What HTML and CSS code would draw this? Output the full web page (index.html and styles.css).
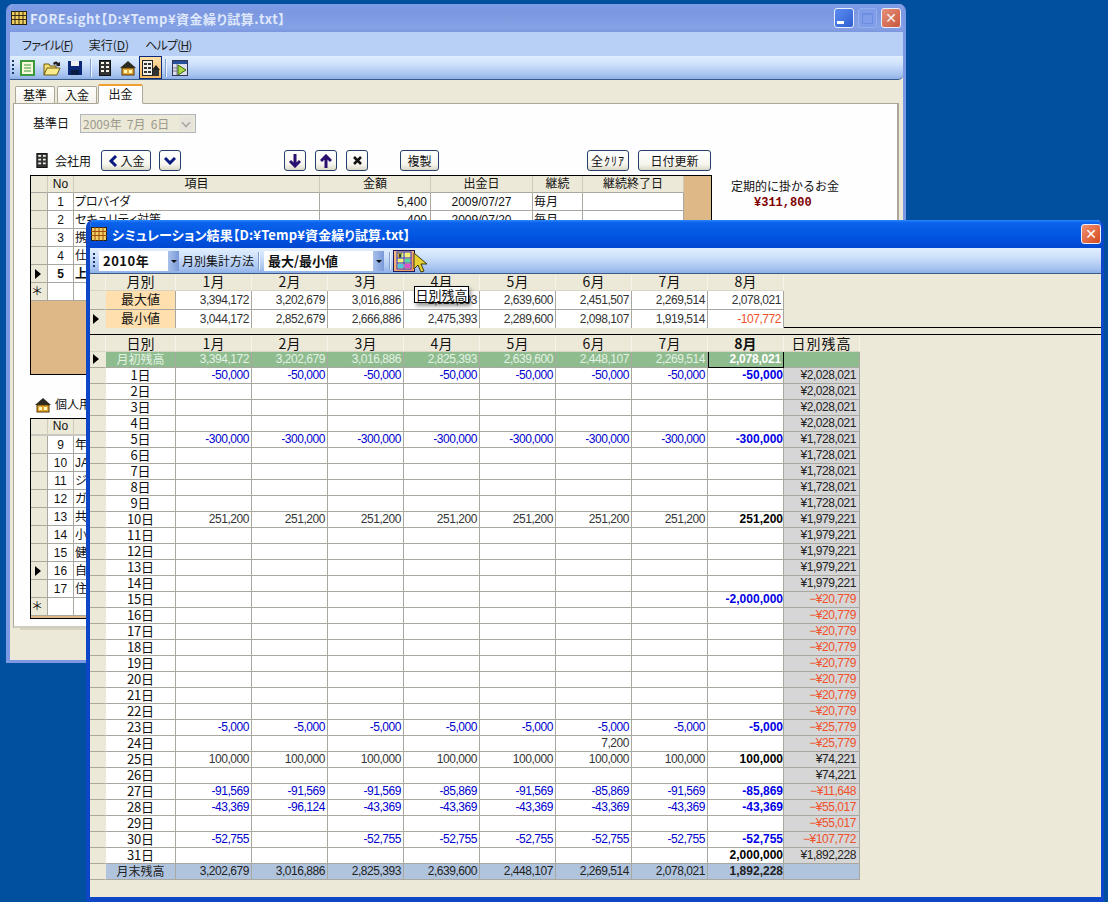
FILE: index.html
```html
<!DOCTYPE html>
<html lang="ja">
<head>
<meta charset="utf-8">
<title>FOREsight</title>
<link rel="stylesheet" href="styles.css">
</head>
<body>
<div class="win win-main">
  <div class="title title-off">
    <svg class="tico" width="16" height="14" viewBox="0 0 16 14"><rect x=".5" y=".5" width="15" height="13" fill="#f0d060" stroke="#2a2010"/><path d="M4 0v14M8 0v14M12 0v14M0 4.500h16M0 8.500h16" stroke="#3a2a10"/></svg>
    <span class="ttext">FOREsight【D:¥Temp¥資金繰り試算.txt】</span>
    <span class="wbtns">
      <span class="wb wb-min"><i></i></span>
      <span class="wb wb-max"><i></i></span>
      <span class="wb wb-close">✕</span>
    </span>
  </div>
  <div class="menu"><span class="mn">ファイル(<u>F</u>)</span><span>実行(<u>D</u>)</span><span class="mn">ヘルプ(<u>H</u>)</span></div>
  <div class="tbar tbar-main">
    <i class="grip"></i>
    <svg class="ic ic-note" width="15" height="16" viewBox="0 0 15 16"><rect x="1" y="1" width="13" height="14" fill="#f6f8d8" stroke="#3c9a3c" stroke-width="2"/><path d="M4 5h7M4 8h7M4 11h7" stroke="#3c9a3c"/></svg>
    <svg class="ic ic-open" width="18" height="16" viewBox="0 0 18 16"><path d="M1 15V4h5l1 2h6v2" fill="#f8e070" stroke="#6a5a10"/><path d="M1 15l3-7h13l-3 7z" fill="#fbe98a" stroke="#6a5a10"/><path d="M10 3c2-2 4-2 5 0l2-1v4h-4l1-1c-1-1-2-1-3 0z" fill="#222"/></svg>
    <svg class="ic ic-save" width="14" height="14" viewBox="0 0 14 14"><rect width="14" height="14" fill="#0a2a78"/><rect x="3" y="0" width="8" height="5" fill="#f0f0f0"/><rect x="3" y="9" width="8" height="5" fill="#0a1a40"/></svg>
    <i class="sep sep1"></i>
    <svg class="ic ic-bld" width="12" height="16" viewBox="0 0 12 16"><rect x=".5" y=".5" width="11" height="15" fill="#333" stroke="#111"/><path d="M2 2h3v2H2zM7 2h3v2H7zM2 6h3v2H2zM7 6h3v2H7zM2 10h3v2H2zM7 10h3v2H7z" fill="#f4f4e8"/></svg>
    <svg class="ic ic-house" width="16" height="16" viewBox="0 0 16 16"><path d="M8 1L0 8h16z" fill="#2a2a20"/><rect x="2" y="8" width="12" height="7" fill="#e8a830" stroke="#50360a"/><rect x="4" y="10" width="3" height="3" fill="#fff8c0"/><rect x="9" y="10" width="3" height="3" fill="#fff8c0"/></svg>
    <span class="tb-on"><svg width="18" height="16" viewBox="0 0 18 16"><rect x=".5" y=".5" width="10" height="15" fill="#f2f0e8" stroke="#222"/><path d="M2 3h3v2H2zM6 3h3v2H6zM2 7h3v2H2zM6 7h3v2H6zM2 11h3v2H2zM6 11h3v2H6z" fill="#333"/><path d="M14 5l4 5H10z" fill="#222"/><rect x="11" y="10" width="6" height="6" fill="#333"/></svg></span>
    <i class="sep sep2"></i>
    <svg class="ic ic-run" width="16" height="16" viewBox="0 0 16 16"><rect x=".5" y=".5" width="15" height="15" fill="#dde" stroke="#335"/><rect x="1" y="1" width="14" height="3" fill="#26509a"/><path d="M1 8h4M1 11h4M5 4v11" stroke="#778"/><path d="M6 5l8 5-8 5z" fill="#a8d840" stroke="#3a6a10"/></svg>
  </div>
  <div class="tabs"><span class="tab">基準</span><span class="tab">入金</span><span class="tab tab-on">出金</span></div>
  <div class="panel">
    <div class="daterow">
      <span class="lbl">基準日</span>
      <span class="combo-off"><span>2009年 7月 6日</span><b></b></span>
    </div>
    <div class="btnrow">
      <svg class="bldico" width="12" height="15" viewBox="0 0 12 16"><rect x=".5" y=".5" width="11" height="15" fill="#333" stroke="#111"/><path d="M2 2h3v2H2zM7 2h3v2H7zM2 6h3v2H2zM7 6h3v2H7zM2 10h3v2H2zM7 10h3v2H7z" fill="#f4f4e8"/></svg>
      <span class="lbl">会社用</span>
      <span class="btn b-in"><svg width="10" height="12" viewBox="0 0 10 12"><path d="M8 1L3 6l5 5" fill="none" stroke="#0a1a80" stroke-width="3"/></svg>入金</span>
      <span class="btn b-ic b-fold"><svg width="12" height="8" viewBox="0 0 12 8"><path d="M1 1l5 5 5-5" fill="none" stroke="#0a1a80" stroke-width="3"/></svg></span>
      <span class="btn b-ic b-down"><svg width="12" height="14" viewBox="0 0 12 14"><path d="M6 0v11M1 7l5 5 5-5" fill="none" stroke="#2a1070" stroke-width="3"/></svg></span>
      <span class="btn b-ic b-up"><svg width="12" height="14" viewBox="0 0 12 14"><path d="M6 14V3M1 7l5-5 5 5" fill="none" stroke="#2a1070" stroke-width="3"/></svg></span>
      <span class="btn b-ic b-del"><svg width="9" height="9" viewBox="0 0 9 9"><path d="M1 1l7 7M8 1L1 8" stroke="#111" stroke-width="2.500"/></svg></span>
      <span class="btn b-copy">複製</span>
      <span class="btn b-clr">全ｸﾘｱ</span>
      <span class="btn b-upd">日付更新</span>
    </div>
    <div class="gridrow">
      <div class="gridbox box1">
        <table class="mg">
          <colgroup><col class="c17"><col class="c26"><col class="c246"><col class="c111"><col class="c102"><col class="c50"><col class="c101"></colgroup>
          <tr class="mh"><th></th><th>No</th><th>項目</th><th>金額</th><th>出金日</th><th>継続</th><th>継続終了日</th></tr>
          <tr><td class="rh"></td><td class="ct">1</td><td>プロバイダ</td><td class="rt">5,400</td><td class="ct">2009/07/27</td><td>毎月</td><td></td></tr>
          <tr><td class="rh"></td><td class="ct">2</td><td>セキュリティ対策</td><td class="rt">400</td><td class="ct">2009/07/20</td><td>毎月</td><td></td></tr>
          <tr><td class="rh"></td><td class="ct">3</td><td>携</td><td></td><td></td><td></td><td></td></tr>
          <tr><td class="rh"></td><td class="ct">4</td><td>仕</td><td></td><td></td><td></td><td></td></tr>
          <tr class="bold"><td class="rh"><i class="ptr"></i></td><td class="ct">5</td><td>上</td><td></td><td></td><td></td><td></td></tr>
          <tr class="newrow"><td class="rh">＊</td><td></td><td></td><td></td><td></td><td></td><td></td></tr>
        </table>
      </div>
      <div class="side">
        <div>定期的に掛かるお金</div>
        <div class="sum">¥311,800</div>
      </div>
    </div>
    <div class="btnrow2">
      <svg width="16" height="16" viewBox="0 0 16 16"><path d="M8 1L0 8h16z" fill="#2a2a20"/><rect x="2" y="8" width="12" height="7" fill="#e8a830" stroke="#50360a"/><rect x="4" y="10" width="3" height="3" fill="#fff8c0"/><rect x="9" y="10" width="3" height="3" fill="#fff8c0"/></svg>
      <span class="lbl">個人用</span>
    </div>
    <div class="gridbox box2">
      <table class="mg">
        <colgroup><col class="c17"><col class="c26"><col class="c246"><col class="c111"><col class="c102"><col class="c50"><col class="c101"></colgroup>
        <tr class="mh"><th></th><th>No</th><th></th><th></th><th></th><th></th><th></th></tr>
        <tr><td class="rh"></td><td class="ct">9</td><td>年</td><td></td><td></td><td></td><td></td></tr>
        <tr><td class="rh"></td><td class="ct">10</td><td>JA</td><td></td><td></td><td></td><td></td></tr>
        <tr><td class="rh"></td><td class="ct">11</td><td>ジ</td><td></td><td></td><td></td><td></td></tr>
        <tr><td class="rh"></td><td class="ct">12</td><td>ガ</td><td></td><td></td><td></td><td></td></tr>
        <tr><td class="rh"></td><td class="ct">13</td><td>共</td><td></td><td></td><td></td><td></td></tr>
        <tr><td class="rh"></td><td class="ct">14</td><td>小</td><td></td><td></td><td></td><td></td></tr>
        <tr><td class="rh"></td><td class="ct">15</td><td>健</td><td></td><td></td><td></td><td></td></tr>
        <tr><td class="rh"><i class="ptr"></i></td><td class="ct">16</td><td>自</td><td></td><td></td><td></td><td></td></tr>
        <tr><td class="rh"></td><td class="ct">17</td><td>住</td><td></td><td></td><td></td><td></td></tr>
        <tr class="newrow"><td class="rh">＊</td><td></td><td></td><td></td><td></td><td></td><td></td></tr>
      </table>
    </div>
  </div>
</div>

<div class="win win-sub">
  <div class="title title-on">
    <svg class="tico2" width="16" height="14" viewBox="0 0 16 14"><rect x=".5" y=".5" width="15" height="13" fill="#f0d060" stroke="#2a2010"/><path d="M4 0v14M8 0v14M12 0v14M0 4.500h16M0 8.500h16" stroke="#a04a10"/></svg>
    <span class="ttext ttext-on">シミュレーション結果【D:¥Temp¥資金繰り試算.txt】</span>
    <span class="wbtns wbtns-sub"><span class="wb wb-close wb-close-on">✕</span></span>
  </div>
  <div class="tbar tbar-sub">
    <i class="grip"></i>
    <span class="combo c-year"><span>2010年</span><b></b></span>
    <span class="tlbl">月別集計方法</span>
    <i class="sep sep3"></i>
    <span class="combo c-mode"><span>最大/最小値</span><b></b></span>
    <i class="sep sep4"></i>
    <span class="tb-on2"><svg width="16" height="19" viewBox="0 0 16 19"><rect x="1" y="1" width="14" height="17" fill="#f4f070" stroke="#3030c0"/><path d="M1 7h14M1 12h14M8 1v17" stroke="#3030e0"/><rect x="9" y="8" width="5" height="3" fill="#50d8a0"/><rect x="2" y="13" width="5" height="4" fill="#50c8e0"/><rect x="9" y="13" width="5" height="4" fill="#e050d0"/><text x="2" y="6.500" class="yen">¥</text></svg></span>
  </div>
  <div class="upper">
    <table class="dg ug">
      <colgroup><col class="g16"><col class="g70"><col class="g76"><col class="g76"><col class="g76"><col class="g76"><col class="g76"><col class="g76"><col class="g76"><col class="g76"></colgroup>
      <tr class="dh"><th></th><th>月別</th><th>1月</th><th>2月</th><th>3月</th><th>4月</th><th>5月</th><th>6月</th><th>7月</th><th>8月</th></tr>
      <tr class="ur"><td class="rh"></td><td class="cap">最大値</td><td>3,394,172</td><td>3,202,679</td><td>3,016,886</td><td>2,825,393</td><td>2,639,600</td><td>2,451,507</td><td>2,269,514</td><td>2,078,021</td></tr>
      <tr class="ur"><td class="rh"><i class="ptr"></i></td><td class="cap">最小値</td><td>3,044,172</td><td>2,852,679</td><td>2,666,886</td><td>2,475,393</td><td>2,289,600</td><td>2,098,107</td><td>1,919,514</td><td class="neg">-107,772</td></tr>
    </table>
  </div>
  <div class="splitter"></div>
  <div class="lower">
    <table class="dg lg">
      <colgroup><col class="g16"><col class="g70"><col class="g76"><col class="g76"><col class="g76"><col class="g76"><col class="g76"><col class="g76"><col class="g76"><col class="g76"><col class="g76"></colgroup>
      <tr class="dh"><th></th><th>日別</th><th>1月</th><th>2月</th><th>3月</th><th>4月</th><th>5月</th><th>6月</th><th>7月</th><th class="bold">8月</th><th class="wide">日別残高</th></tr>
      <tr class="open"><td class="rh"><i class="ptr"></i></td><td class="lb lb4">月初残高</td><td>3,394,172</td><td>3,202,679</td><td>3,016,886</td><td>2,825,393</td><td>2,639,600</td><td>2,448,107</td><td>2,269,514</td><td class="cur">2,078,021</td><td></td></tr>
      <tr class="bl"><td class="rh"></td><td class="lb">1日</td><td>-50,000</td><td>-50,000</td><td>-50,000</td><td>-50,000</td><td>-50,000</td><td>-50,000</td><td>-50,000</td><td class="m8">-50,000</td><td class="bal">¥2,028,021</td></tr>
      <tr><td class="rh"></td><td class="lb">2日</td><td></td><td></td><td></td><td></td><td></td><td></td><td></td><td></td><td class="bal">¥2,028,021</td></tr>
      <tr><td class="rh"></td><td class="lb">3日</td><td></td><td></td><td></td><td></td><td></td><td></td><td></td><td></td><td class="bal">¥2,028,021</td></tr>
      <tr><td class="rh"></td><td class="lb">4日</td><td></td><td></td><td></td><td></td><td></td><td></td><td></td><td></td><td class="bal">¥2,028,021</td></tr>
      <tr class="bl"><td class="rh"></td><td class="lb">5日</td><td>-300,000</td><td>-300,000</td><td>-300,000</td><td>-300,000</td><td>-300,000</td><td>-300,000</td><td>-300,000</td><td class="m8">-300,000</td><td class="bal">¥1,728,021</td></tr>
      <tr><td class="rh"></td><td class="lb">6日</td><td></td><td></td><td></td><td></td><td></td><td></td><td></td><td></td><td class="bal">¥1,728,021</td></tr>
      <tr><td class="rh"></td><td class="lb">7日</td><td></td><td></td><td></td><td></td><td></td><td></td><td></td><td></td><td class="bal">¥1,728,021</td></tr>
      <tr><td class="rh"></td><td class="lb">8日</td><td></td><td></td><td></td><td></td><td></td><td></td><td></td><td></td><td class="bal">¥1,728,021</td></tr>
      <tr><td class="rh"></td><td class="lb">9日</td><td></td><td></td><td></td><td></td><td></td><td></td><td></td><td></td><td class="bal">¥1,728,021</td></tr>
      <tr><td class="rh"></td><td class="lb">10日</td><td>251,200</td><td>251,200</td><td>251,200</td><td>251,200</td><td>251,200</td><td>251,200</td><td>251,200</td><td class="m8">251,200</td><td class="bal">¥1,979,221</td></tr>
      <tr><td class="rh"></td><td class="lb">11日</td><td></td><td></td><td></td><td></td><td></td><td></td><td></td><td></td><td class="bal">¥1,979,221</td></tr>
      <tr><td class="rh"></td><td class="lb">12日</td><td></td><td></td><td></td><td></td><td></td><td></td><td></td><td></td><td class="bal">¥1,979,221</td></tr>
      <tr><td class="rh"></td><td class="lb">13日</td><td></td><td></td><td></td><td></td><td></td><td></td><td></td><td></td><td class="bal">¥1,979,221</td></tr>
      <tr><td class="rh"></td><td class="lb">14日</td><td></td><td></td><td></td><td></td><td></td><td></td><td></td><td></td><td class="bal">¥1,979,221</td></tr>
      <tr class="bl"><td class="rh"></td><td class="lb">15日</td><td></td><td></td><td></td><td></td><td></td><td></td><td></td><td class="m8">-2,000,000</td><td class="bal neg">−¥20,779</td></tr>
      <tr><td class="rh"></td><td class="lb">16日</td><td></td><td></td><td></td><td></td><td></td><td></td><td></td><td></td><td class="bal neg">−¥20,779</td></tr>
      <tr><td class="rh"></td><td class="lb">17日</td><td></td><td></td><td></td><td></td><td></td><td></td><td></td><td></td><td class="bal neg">−¥20,779</td></tr>
      <tr><td class="rh"></td><td class="lb">18日</td><td></td><td></td><td></td><td></td><td></td><td></td><td></td><td></td><td class="bal neg">−¥20,779</td></tr>
      <tr><td class="rh"></td><td class="lb">19日</td><td></td><td></td><td></td><td></td><td></td><td></td><td></td><td></td><td class="bal neg">−¥20,779</td></tr>
      <tr><td class="rh"></td><td class="lb">20日</td><td></td><td></td><td></td><td></td><td></td><td></td><td></td><td></td><td class="bal neg">−¥20,779</td></tr>
      <tr><td class="rh"></td><td class="lb">21日</td><td></td><td></td><td></td><td></td><td></td><td></td><td></td><td></td><td class="bal neg">−¥20,779</td></tr>
      <tr><td class="rh"></td><td class="lb">22日</td><td></td><td></td><td></td><td></td><td></td><td></td><td></td><td></td><td class="bal neg">−¥20,779</td></tr>
      <tr class="bl"><td class="rh"></td><td class="lb">23日</td><td>-5,000</td><td>-5,000</td><td>-5,000</td><td>-5,000</td><td>-5,000</td><td>-5,000</td><td>-5,000</td><td class="m8">-5,000</td><td class="bal neg">−¥25,779</td></tr>
      <tr><td class="rh"></td><td class="lb">24日</td><td></td><td></td><td></td><td></td><td></td><td>7,200</td><td></td><td></td><td class="bal neg">−¥25,779</td></tr>
      <tr><td class="rh"></td><td class="lb">25日</td><td>100,000</td><td>100,000</td><td>100,000</td><td>100,000</td><td>100,000</td><td>100,000</td><td>100,000</td><td class="m8">100,000</td><td class="bal">¥74,221</td></tr>
      <tr><td class="rh"></td><td class="lb">26日</td><td></td><td></td><td></td><td></td><td></td><td></td><td></td><td></td><td class="bal">¥74,221</td></tr>
      <tr class="bl"><td class="rh"></td><td class="lb">27日</td><td>-91,569</td><td>-91,569</td><td>-91,569</td><td>-85,869</td><td>-91,569</td><td>-85,869</td><td>-91,569</td><td class="m8">-85,869</td><td class="bal neg">−¥11,648</td></tr>
      <tr class="bl"><td class="rh"></td><td class="lb">28日</td><td>-43,369</td><td>-96,124</td><td>-43,369</td><td>-43,369</td><td>-43,369</td><td>-43,369</td><td>-43,369</td><td class="m8">-43,369</td><td class="bal neg">−¥55,017</td></tr>
      <tr><td class="rh"></td><td class="lb">29日</td><td></td><td></td><td></td><td></td><td></td><td></td><td></td><td></td><td class="bal neg">−¥55,017</td></tr>
      <tr class="bl"><td class="rh"></td><td class="lb">30日</td><td>-52,755</td><td></td><td>-52,755</td><td>-52,755</td><td>-52,755</td><td>-52,755</td><td>-52,755</td><td class="m8">-52,755</td><td class="bal neg">−¥107,772</td></tr>
      <tr><td class="rh"></td><td class="lb">31日</td><td></td><td></td><td></td><td></td><td></td><td></td><td></td><td class="m8">2,000,000</td><td class="bal">¥1,892,228</td></tr>
      <tr class="close"><td class="rh"></td><td class="lb lb4">月末残高</td><td>3,202,679</td><td>3,016,886</td><td>2,825,393</td><td>2,639,600</td><td>2,448,107</td><td>2,269,514</td><td>2,078,021</td><td class="m8">1,892,228</td><td></td></tr>
    </table>
  </div>
</div>

<div class="tooltip">日別残高</div>
<svg class="cursor" width="16" height="21" viewBox="0 0 16 21"><path d="M1 1v16l4-4 3 7 3-1-3-7h6z" fill="#e8d030" stroke="#3a3a10"/></svg>
</body>
</html>
```

FILE: styles.css
```css
* { box-sizing: border-box; }
html, body { margin: 0; padding: 0; }
body {
  width: 1108px; height: 902px; overflow: hidden; position: relative;
  background: #00509f;
  font-family: "Noto Sans CJK JP", "Liberation Sans", sans-serif;
  font-size: 12px; color: #111;
}
.win { position: absolute; display: flex; flex-direction: column; border-radius: 7px 7px 0 0; overflow: hidden; }
.win-main { left: 6px; top: 4px; width: 900px; height: 659px; background: #ece9d8; border: solid #7c98e2; border-width: 0 3px 3px 4px; }
.win-sub { left: 86px; top: 220px; width: 1018px; height: 682px; background: #ece9d8; border: solid #0d47c8; border-width: 0 3px 5px 4px; }

.title { flex: none; height: 28px; display: flex; align-items: center; position: relative; margin: 0 -3px 0 -4px; padding-left: 5px; }
.title-off { background: linear-gradient(#7f9ce8, #7b97e0 30%, #86a2e6 85%, #7b96dd); height: 28px; }
.title-on { background: linear-gradient(#2a86ff 0, #0a62ea 10%, #0254e2 60%, #0047d0); }
.tico { margin-top: -1px; margin-left: 0; }
.tico2 { margin-left: 0; }
.ttext { font-weight: 700; font-size: 13px; margin-left: 3px; color: #dfe8fb; white-space: nowrap; font-feature-settings: "palt"; letter-spacing: .5px; }
.ttext-on { color: #fff; margin-left: 5px; letter-spacing: .15px; }
.wbtns { margin-left: auto; display: flex; gap: 4px; padding-right: 5px; }
.wbtns-sub { padding-right: 3px; }
.wb { width: 20px; height: 20px; border-radius: 3px; border: 1px solid #e8eefc; display: flex; align-items: center; justify-content: center; font: 700 14px "DejaVu Sans", sans-serif; color: #f4f4f4; }
.wb-min { background: linear-gradient(135deg, #5c8cf0, #2f5fd0); position: relative; }
.wb-min i { width: 7px; height: 3px; background: #fff; margin: 9px 7px 0 0; }
.wb-max { width: 19px; background: #7f9de8; border-color: #95aeee; }
.wb-max i { width: 11px; height: 11px; border: 1px solid #6c8ee0; border-top-width: 2px; }
.wb-close { background: linear-gradient(135deg, #e89078, #c8563e); }
.wb-close-on { background: linear-gradient(135deg, #f09070, #d44a1e); color: #fff; }

.menu { flex: none; height: 24px; background: #b8d0f6; display: flex; gap: 16px; align-items: center; padding-left: 12px; color: #222; font-feature-settings: "palt"; }
.menu span { white-space: nowrap; }
.menu .mn { letter-spacing: -.8px; }

.tbar { flex: none; display: flex; align-items: center; position: relative; background: linear-gradient(#e0eefe, #cfe1fb 35%, #a8c4f0 80%, #8fb0e6); border-bottom: 1px solid #3a5a8a; }
.tbar-main { height: 24px; margin: 0 0 0 -1px; border-radius: 0 0 5px 0; }
.tbar-sub { height: 26px; }
.grip { width: 2px; height: 16px; margin-left: 3px; background: repeating-linear-gradient(#1a3a70 0 2px, transparent 2px 4px); flex: none; }
.ic { flex: none; }
.ic-note { margin-left: 6px; }
.ic-open { margin-left: 8px; }
.ic-save { margin-left: 7px; }
.sep { width: 1px; height: 18px; background: #7f9fd0; flex: none; box-shadow: 1px 0 #eef4fe; }
.sep1 { margin-left: 8px; }
.ic-bld { margin-left: 8px; }
.ic-house { margin-left: 9px; }
.tb-on { width: 23px; height: 23px; margin-left: 3px; background: linear-gradient(#fde0a8, #f8b860); border: 1px solid #0a2a78; display: flex; align-items: center; justify-content: center; flex: none; }
.sep2 { margin-left: 3px; }
.ic-run { margin-left: 6px; }

.tabs { flex: none; height: 23px; display: flex; align-items: flex-end; padding-left: 5px; background: #ece9d8; gap: 2px; position: relative; z-index: 1; }
.tab { width: 40px; height: 17px; background: linear-gradient(#fff, #f4f2ea); border: 1px solid #aca899; border-bottom: 0; border-radius: 2px 2px 0 0; text-align: center; line-height: 16px; }
.tab-on { width: 45px; height: 20px; margin-left: -1px; background: #fefefe; border-top: 2px solid #f0a030; border-left-color: #aca899; border-bottom: 1px solid #fefefe; margin-bottom: -1px; line-height: 15px; }

.panel { flex: none; width: 886px; height: 525px; margin-left: 3px; background: #fefefe; border: 1px solid #aca899; border-right: 2px solid #aca899; border-bottom: 2px solid #d0cdbc; padding: 10px 0 0 16px; box-shadow: 0 9px 0 -7px #d6d3c2; }
.lbl { white-space: nowrap; }
.daterow { display: flex; align-items: center; margin-left: 3px; height: 19px; gap: 11px; }
.daterow .lbl { margin-bottom: 3px; }
.combo-off { width: 116px; height: 19px; border: 1px solid #b0b6c0; background: #ece9d8; color: #9a9a8c; display: flex; align-items: center; justify-content: space-between; padding: 0 2px; font-size: 12px; white-space: nowrap; word-spacing: 2.500px; }
.combo-off b { width: 14px; height: 14px; background: #e6e4da; position: relative; }
.combo-off b::after { content: ""; position: absolute; left: 3px; top: 2px; width: 6px; height: 6px; border: solid #a8a8a0; border-width: 0 2px 2px 0; transform: rotate(45deg) scale(.8); }

.btnrow { display: flex; align-items: center; height: 21px; margin-top: 17px; }
.bldico { margin-left: 6px; }
.btnrow .lbl { margin-left: 7px; margin-right: 10px; }
.btn { height: 21px; border: 1px solid #243f6a; border-radius: 3px; background: linear-gradient(#fff, #f6f5ee 70%, #dcd8c8); display: flex; align-items: center; justify-content: center; flex: none; white-space: nowrap; }
.b-ic { width: 22px; }
.b-in { width: 50px; gap: 3px; }
.b-fold { margin-left: 8px; }
.b-down { margin-left: 103px; }
.b-up { margin-left: 9px; }
.b-del { margin-left: 9px; }
.b-copy { width: 39px; margin-left: 32px; }
.b-clr { width: 42px; margin-left: 148px; letter-spacing: 1px; }
.b-upd { width: 73px; margin-left: 9px; }

.gridrow { display: flex; margin-top: 4px; height: 200px; }
.gridbox { width: 682px; border: 1px solid #000; background: #deb887; flex: none; overflow: hidden; }
.box1 { height: 200px; }
.box2 { height: 201px; margin-top: 5px; }
.side { margin-left: 19px; padding-top: 2px; line-height: 18px; white-space: nowrap; }
.sum { font: 700 12px "Liberation Mono", monospace; color: #800000; padding-left: 23px; line-height: 16px; }
.btnrow2 { display: flex; align-items: center; height: 16px; margin: 22px 0 0 5px; gap: 4px; }
.btnrow2 .lbl { margin-bottom: 3px; }

table { border-collapse: separate; border-spacing: 0; table-layout: fixed; }
.mg { width: 653px; }
.c17 { width: 17px; } .c26 { width: 26px; } .c246 { width: 246px; } .c111 { width: 111px; } .c102 { width: 102px; } .c50 { width: 50px; } .c101 { width: 101px; }
.mg th, .mg td { height: 18px; padding: 0; line-height: 16px; border-right: 1px solid #a8a8a0; border-bottom: 1px solid #a8a8a0; background: #fff; font-weight: 400; white-space: nowrap; font-size: 12px; font-family: "Liberation Sans", "Noto Sans CJK JP", sans-serif; font-feature-settings: "palt"; }
.mg td { padding: 0 1px; }
.mg th { background: #ece9d8; height: 16px; border-right-color: #cfccba; line-height: 15px; }
.mg tr:first-child th { height: 17px; }
.mg td.rh { background: #ece9d8; border-right-color: #a8a8a0; border-bottom-color: #aca899; }
.mg td.ct { text-align: center; }
.mg td.rt { text-align: right; padding-right: 3px; }
.mg tr.bold td { font-weight: 700; }
.box2 .mh th { height: 18px; border-bottom: 2px solid #c8c8c0; }
.ptr { display: inline-block; width: 0; height: 0; border-left: 6px solid #000; border-top: 5px solid transparent; border-bottom: 5px solid transparent; margin-left: 3px; vertical-align: -1px; }

.combo { height: 20px; background: #fff; display: flex; align-items: center; justify-content: space-between; font-weight: 700; font-size: 13px; padding-left: 4px; white-space: nowrap; }
.combo b { width: 11px; height: 100%; background: linear-gradient(90deg, #a8c0ea, #7a9ad8); position: relative; }
.combo b::after { content: ""; position: absolute; left: 3px; top: 9px; border: 3px solid transparent; border-top-color: #111; border-bottom-width: 0; }
.c-year { width: 80px; margin-left: 4px; letter-spacing: .5px; }
.c-mode { width: 120px; margin-left: 5px; }
.tlbl { margin-left: 3px; white-space: nowrap; }
.sep3 { margin-left: 4px; }
.sep4 { margin-left: 5px; }
.tb-on2 { width: 22px; height: 22px; margin-left: 3px; background: linear-gradient(135deg, #f6c088, #f09060); border: 1px solid #1a1a60; display: flex; align-items: center; justify-content: center; }
.yen { font: 700 7px "Liberation Sans", sans-serif; fill: #111; }

.upper { flex: none; height: 54px; padding-top: 1px; border-bottom: 1px solid #000; }
.splitter { flex: none; height: 7px; background: #ece9d8; border-bottom: 1px solid #000; }
.lower { flex: 1; }
.dg { font-family: "Liberation Sans", "Noto Sans CJK JP", sans-serif; font-size: 12px; letter-spacing: -.45px; }
.ug { width: 694px; }
.lg { width: 770px; }
.g16 { width: 16px; } .g70 { width: 70px; } .g76 { width: 76px; }
.dg th, .dg td { padding: 0 2px 0 0; border-right: 1px solid #a8a8a0; border-bottom: 1px solid #a8a8a0; height: 16px; line-height: 15px; text-align: right; white-space: nowrap; background: #fff; color: #333; }
.dg th { font-family: "Noto Sans CJK JP", sans-serif; font-size: 14px; font-weight: 400; text-align: center; background: #ece9d8; color: #111; border-right-color: #f6f4ea; border-bottom-color: #d8d5c4; line-height: 16px; padding: 0; letter-spacing: 0; }
.dg.ug th { padding-bottom: 2px; line-height: 13px; }
.dg th.bold { font-weight: 700; }
.dg th.wide { letter-spacing: 1px; }
.dg td.rh { background: #ece9d8; border-right-color: #ece9d8; border-bottom-color: #aca899; padding: 0; text-align: left; }
.ug tr.ur td { height: 18px; line-height: 16px; }
.ug td.cap { background: #ffdfae; text-align: center; font-family: "Noto Sans CJK JP", sans-serif; font-size: 13px; padding: 0 0 2px; color: #111; letter-spacing: 0; line-height: 14px; }
.dg td.lb { text-align: center; font-family: "Noto Sans CJK JP", sans-serif; font-size: 13px; padding: 0 0 2px; color: #111; line-height: 13px; letter-spacing: -.2px; }
.dg td.lb4 { font-size: 12px; letter-spacing: 0; }
.bl td { color: #0000cd; }
.dg td.m8 { font-weight: 700; color: #000; padding-right: 0; letter-spacing: 0; }
.dg .bl td.m8 { color: #0000e6; }
.dg td.bal { background: #d6d6d6; color: #222; padding-right: 3px; }
.dg td.neg { color: #f0502a; }
.open td { background: #8fbc8f !important; color: #e4f2e4 !important; }
.dg .open td.lb { color: #e4f2e4 !important; }
.open td.rh { background: #ece9d8 !important; }
.dg td.cur { font-weight: 700; letter-spacing: -.2px; color: #fff !important; border: solid #000; border-width: 0 1px 1px 1px; }
.close td { background: #b0c4de !important; color: #222 !important; }
.close td.rh { background: #ece9d8 !important; }

.tooltip { position: absolute; left: 414px; top: 286px; width: 55px; height: 17px; background: #fff; border: 1px solid #000; text-align: center; line-height: 15px; font-size: 13px; box-shadow: 2px 3px 4px rgba(0,0,0,.4); white-space: nowrap; }
.cursor { position: absolute; left: 413px; top: 252px; }
```
